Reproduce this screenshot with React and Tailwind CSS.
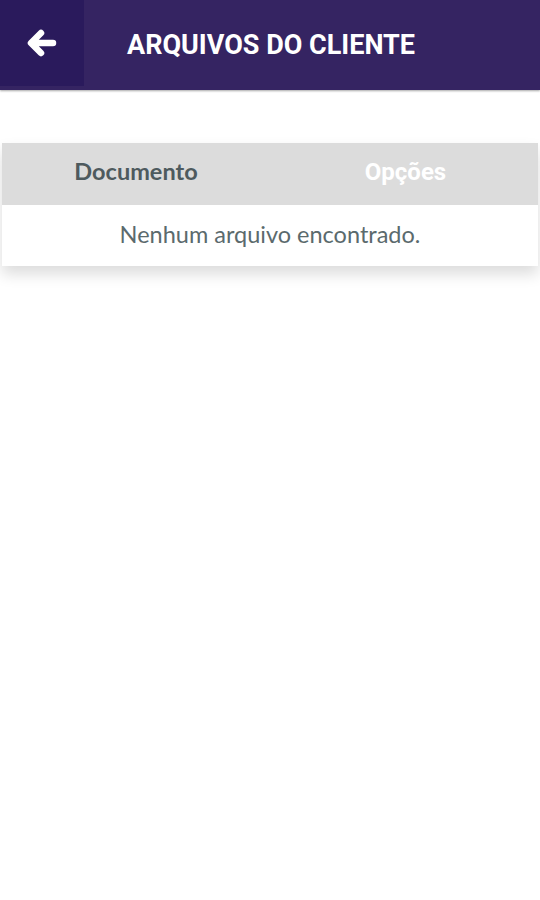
export default function App() {
  return (
    <div className="min-h-[900px] bg-white font-['Lato','Noto_Sans',sans-serif]">
      {/* Barra superior */}
      <div className="flex h-[90px] bg-[#352462] shadow-[0_1px_2px_rgba(0,0,0,0.35)]">
        <button className="flex h-[86px] w-[84px] items-center justify-center bg-[#2a1a5c]">
          <svg width="30" height="28" viewBox="0 0 30 28" fill="none">
            <path
              d="M14 4 L4 14 L14 24 M5 14 H26"
              stroke="white"
              strokeWidth="6.5"
              strokeLinecap="round"
              strokeLinejoin="round"
            />
          </svg>
        </button>
        <h1 className="ml-[43px] mt-[28px] font-['Roboto',sans-serif] text-[27px] font-bold leading-[34px] text-white">
          ARQUIVOS DO CLIENTE
        </h1>
      </div>

      {/* Tabela de arquivos */}
      <div className="mx-[2px] mt-[53px] shadow-[0_8px_14px_rgba(0,0,0,0.14)]">
        <div className="grid h-[62px] grid-cols-2 items-center bg-[#dcdcdc] pb-[4px]">
          <span className="text-center text-[23.5px] font-bold leading-none text-[#4e5a5e]">Documento</span>
          <span className="pl-[3px] text-center font-['Roboto',sans-serif] text-[24px] font-bold leading-none text-white">
            Opções
          </span>
        </div>
        <div className="flex h-[61px] items-center justify-center bg-white pb-[2px]">
          <p className="text-[23.5px] leading-none text-[#5b6a6d]">Nenhum arquivo encontrado.</p>
        </div>
      </div>
    </div>
  );
}
